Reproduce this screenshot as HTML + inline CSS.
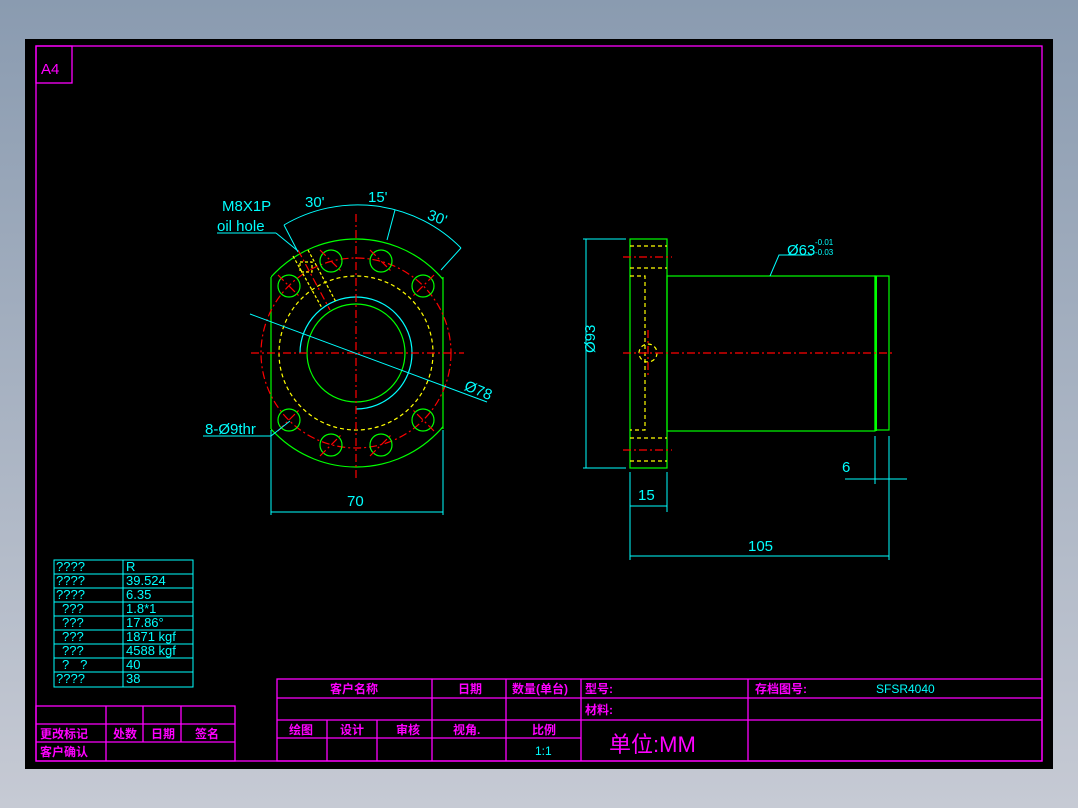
<!DOCTYPE html>
<html><head><meta charset="utf-8"><style>
html,body{margin:0;padding:0;width:1078px;height:808px;overflow:hidden;background:linear-gradient(#8a9bb0,#c6cad4);}
svg{position:absolute;left:0;top:0}
text{font-family:"Liberation Sans","Noto Sans CJK SC",sans-serif}
</style></head><body>
<svg width="1078" height="808" viewBox="0 0 1078 808">
<rect x="25" y="39" width="1028" height="730" fill="#000"/>
<g fill="none" stroke="#f0f" stroke-width="1.3">
<rect x="36" y="46" width="1006" height="715"/>
<rect x="36" y="46" width="36" height="37"/>
<!-- bottom right table -->
<rect x="277" y="679" width="765" height="82"/>
<line x1="277" y1="698" x2="1042" y2="698"/>
<line x1="277" y1="720" x2="1042" y2="720"/>
<line x1="277" y1="738" x2="581" y2="738"/>
<line x1="327" y1="720" x2="327" y2="761"/>
<line x1="377" y1="720" x2="377" y2="761"/>
<line x1="432" y1="679" x2="432" y2="761"/>
<line x1="506" y1="679" x2="506" y2="761"/>
<line x1="581" y1="679" x2="581" y2="761"/>
<line x1="748" y1="679" x2="748" y2="761"/>
<!-- bottom left table -->
<rect x="36" y="706" width="199" height="55"/>
<line x1="36" y1="724" x2="235" y2="724"/>
<line x1="36" y1="742" x2="235" y2="742"/>
<line x1="106" y1="706" x2="106" y2="761"/>
<line x1="143" y1="706" x2="143" y2="742"/>
<line x1="181" y1="706" x2="181" y2="742"/>
</g>
<text x="41" y="74" fill="#f0f" font-size="15">A4</text>
<g fill="#f0f" font-size="12" font-weight="bold">
<text x="330" y="693">客户名称</text>
<text x="458" y="693">日期</text>
<text x="512" y="693">数量(单台)</text>
<text x="585" y="693">型号:</text>
<text x="755" y="693">存档图号:</text>
<text x="585" y="714">材料:</text>
<text x="289" y="734">绘图</text>
<text x="340" y="734">设计</text>
<text x="396" y="734">审核</text>
<text x="453" y="734">视角.</text>
<text x="532" y="734">比例</text>
<text x="40" y="738">更改标记</text>
<text x="113" y="738">处数</text>
<text x="151" y="738">日期</text>
<text x="195" y="738">签名</text>
<text x="40" y="756">客户确认</text>
</g>
<text x="609" y="752" fill="#f0f" font-size="22">单位:MM</text>
<text x="876" y="693" fill="#0ff" font-size="12">SFSR4040</text>
<text x="535" y="755" fill="#0ff" font-size="12">1:1</text>
<!-- cyan param table -->
<g stroke="#0ff" stroke-width="1" fill="none">
<rect x="54" y="560" width="139" height="127"/>
<line x1="123" y1="560" x2="123" y2="687"/>
<line x1="54" y1="574" x2="193" y2="574"/><line x1="54" y1="588" x2="193" y2="588"/>
<line x1="54" y1="602" x2="193" y2="602"/><line x1="54" y1="616" x2="193" y2="616"/>
<line x1="54" y1="630" x2="193" y2="630"/><line x1="54" y1="644" x2="193" y2="644"/>
<line x1="54" y1="658" x2="193" y2="658"/><line x1="54" y1="672" x2="193" y2="672"/>
</g>
<g fill="#0ff" font-size="13">
<text x="56" y="571">????</text><text x="126" y="571">R</text>
<text x="56" y="585">????</text><text x="126" y="585">39.524</text>
<text x="56" y="599">????</text><text x="126" y="599">6.35</text>
<text x="62" y="613">???</text><text x="126" y="613">1.8*1</text>
<text x="62" y="627">???</text><text x="126" y="627">17.86°</text>
<text x="62" y="641">???</text><text x="126" y="641">1871 kgf</text>
<text x="62" y="655">???</text><text x="126" y="655">4588 kgf</text>
<text x="62" y="669">?&#160;&#160;&#160;?</text><text x="126" y="669">40</text>
<text x="56" y="683">????</text><text x="126" y="683">38</text>
</g>
<!-- front view -->
<defs><clipPath id="fc"><rect x="271" y="200" width="172" height="300"/></clipPath></defs>
<g fill="none" stroke-width="1.2">
<circle cx="356" cy="353" r="114" stroke="#0f0" clip-path="url(#fc)"/>
<line x1="271" y1="277" x2="271" y2="429" stroke="#0f0"/>
<line x1="443" y1="277" x2="443" y2="429" stroke="#0f0"/>
<circle cx="356" cy="353" r="95" stroke="#f00" stroke-dasharray="8,3,2,3"/>
<circle cx="356" cy="353" r="77" stroke="#ff0" stroke-dasharray="4,3"/>
<path d="M300 353 A56 56 0 1 1 356 409" stroke="#0ff"/>
<circle cx="356" cy="353" r="49" stroke="#0f0"/>
<g stroke="#0f0">
<circle cx="331" cy="261" r="11"/><circle cx="381" cy="261" r="11"/>
<circle cx="289" cy="286" r="11"/><circle cx="423" cy="286" r="11"/>
<circle cx="289" cy="420" r="11"/><circle cx="423" cy="420" r="11"/>
<circle cx="331" cy="445" r="11"/><circle cx="381" cy="445" r="11"/>
</g>
<g stroke="#f00" stroke-dasharray="8,3,2,3">
<line x1="251" y1="353" x2="464" y2="353"/>
<line x1="356" y1="214" x2="356" y2="478"/>
<line x1="320" y1="250" x2="342" y2="272"/><line x1="370" y1="250" x2="392" y2="272"/>
<line x1="278" y1="275" x2="300" y2="297"/><line x1="434" y1="275" x2="412" y2="297"/>
<line x1="278" y1="431" x2="300" y2="409"/><line x1="434" y1="431" x2="412" y2="409"/>
<line x1="320" y1="456" x2="342" y2="434"/><line x1="370" y1="456" x2="392" y2="434"/>
<line x1="298" y1="250" x2="330" y2="310"/>
</g>
<g stroke="#ff0" stroke-dasharray="3,2">
<line x1="293" y1="256" x2="322" y2="308"/><line x1="308" y1="250" x2="336" y2="302"/>
<rect x="300" y="262" width="12" height="10"/>
</g>
<g stroke="#0ff" stroke-width="1">
<path d="M284 225 A145 145 0 0 1 461 248"/>
<line x1="284" y1="225" x2="298" y2="252"/>
<line x1="395" y1="210" x2="387" y2="240"/>
<line x1="461" y1="248" x2="441" y2="270"/>
<line x1="217" y1="233" x2="276" y2="233"/><line x1="276" y1="233" x2="298" y2="251"/>
<line x1="203" y1="436" x2="271" y2="436"/><line x1="271" y1="436" x2="290" y2="421"/>
<line x1="250" y1="314" x2="487" y2="402"/>
<line x1="271" y1="430" x2="271" y2="515"/><line x1="443" y1="430" x2="443" y2="515"/>
<line x1="271" y1="512" x2="443" y2="512"/>
</g>
</g>
<g fill="#0ff" font-size="15">
<text x="222" y="211">M8X1P</text>
<text x="217" y="231">oil hole</text>
<text x="305" y="207">30'</text>
<text x="368" y="202">15'</text>
<text x="428" y="222" transform="rotate(20 436 216)">30'</text>
<text x="465" y="395" transform="rotate(22 478 388)">Ø78</text>
<text x="205" y="434">8-Ø9thr</text>
<text x="347" y="506">70</text>
<text x="638" y="500">15</text>
<text x="748" y="551">105</text>
<text x="842" y="472">6</text>
<text x="787" y="255">Ø63</text>
<text x="580" y="368" transform="rotate(-90 580 353)">Ø93</text>
</g>
<g fill="#0ff" font-size="8"><text x="815" y="245">-0.01</text><text x="815" y="255">-0.03</text></g>
<!-- side view -->
<g fill="none" stroke-width="1.2">
<rect x="630" y="239" width="37" height="229" stroke="#0f0"/>
<rect x="667" y="276" width="208" height="155" stroke="#0f0"/>
<rect x="875" y="276" width="14" height="154" stroke="#0f0"/>
<line x1="876" y1="276" x2="876" y2="431" stroke="#0f0" stroke-width="2"/>
<g stroke="#ff0" stroke-dasharray="4,3">
<line x1="630" y1="246" x2="667" y2="246"/><line x1="630" y1="268" x2="667" y2="268"/>
<line x1="630" y1="438" x2="667" y2="438"/><line x1="630" y1="461" x2="667" y2="461"/>
<polyline points="630,276 645,276 645,430 630,430"/>
<circle cx="648" cy="353" r="9"/>
</g>
<g stroke="#f00" stroke-dasharray="8,3,2,3">
<line x1="623" y1="257" x2="672" y2="257"/><line x1="623" y1="450" x2="672" y2="450"/>
<line x1="623" y1="353" x2="894" y2="353"/>
<line x1="648" y1="330" x2="648" y2="378"/>
</g>
<g stroke="#0ff" stroke-width="1">
<line x1="583" y1="239" x2="626" y2="239"/><line x1="583" y1="468" x2="626" y2="468"/>
<line x1="586" y1="239" x2="586" y2="468"/>
<line x1="630" y1="472" x2="630" y2="560"/><line x1="667" y1="472" x2="667" y2="512"/>
<line x1="630" y1="506" x2="667" y2="506"/>
<line x1="889" y1="436" x2="889" y2="560"/><line x1="875" y1="436" x2="875" y2="484"/>
<line x1="630" y1="556" x2="889" y2="556"/>
<line x1="845" y1="479" x2="907" y2="479"/>
<polyline points="770,276 779,255 812,255"/>
</g>
</g>
</svg>
</body></html>
